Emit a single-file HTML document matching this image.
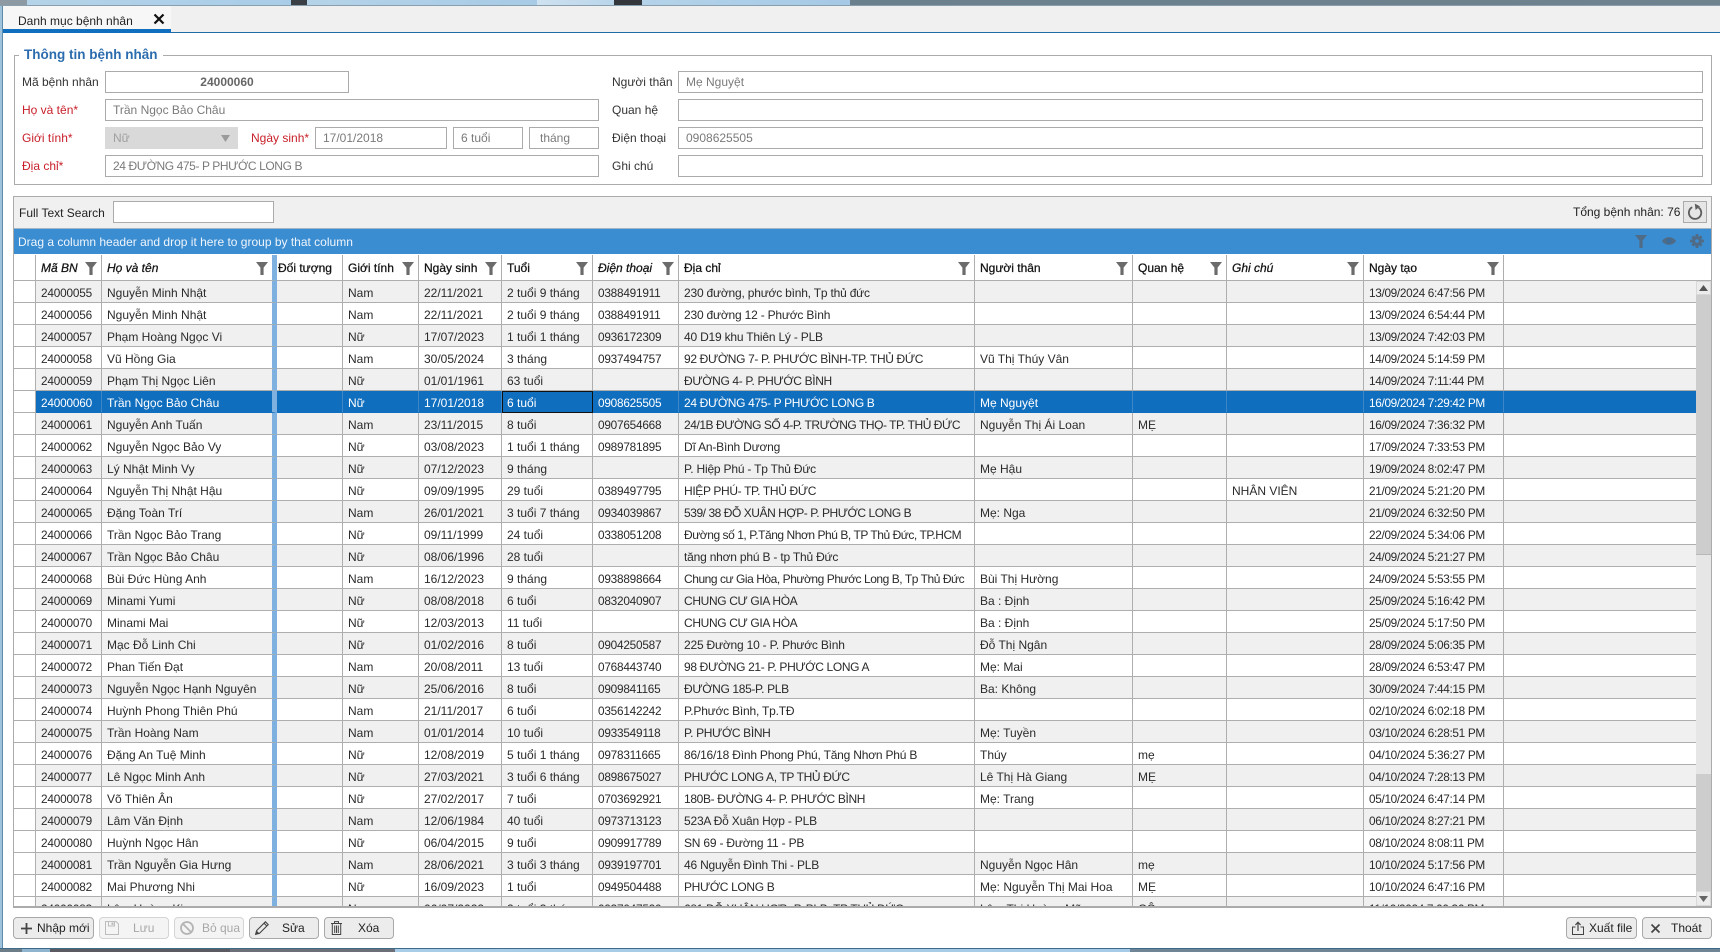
<!DOCTYPE html>
<html lang="vi"><head><meta charset="utf-8"><title>Danh mục bệnh nhân</title>
<style>
html,body{margin:0;padding:0;width:1720px;height:952px;overflow:hidden;background:#fff;font-family:"Liberation Sans","Noto Sans CJK SC",sans-serif;font-size:12px;color:#222}
.a{position:absolute}
.lb{position:absolute;line-height:22px;height:22px;white-space:nowrap;color:#333}
.req{color:#c8202a}
.in{position:absolute;box-sizing:border-box;height:22px;border:1px solid #ababab;background:#fff;line-height:20px;padding-left:7px;color:#7a7a7a;white-space:nowrap;overflow:hidden}
table{border-collapse:separate;border-spacing:0;table-layout:fixed;width:1682px}
td{box-sizing:border-box;height:22px;padding:3px 0 0 5px;vertical-align:top;border-right:1px solid #aeaeae;border-bottom:1px solid #aeaeae;white-space:nowrap;overflow:hidden;line-height:18px;color:#2a2a2a;font-size:12px}
#bd tr:nth-child(odd) td{background:#f0f0f0}
#bd tr:nth-child(even) td{background:#fff}
#bd td:nth-child(1){background:#fff!important}
#bd td:nth-child(2){font-size:11.8px;letter-spacing:-.19px}
#bd td:nth-child(8){font-size:11.8px;letter-spacing:-.23px}
#bd td:nth-child(9){letter-spacing:-.2px}
#bd td.u{letter-spacing:-.35px}
#bd td.v{letter-spacing:-.45px}
#bd td:nth-child(13){font-size:11.8px;letter-spacing:-.32px}
#bd td:nth-child(3){border-right:5px solid #7fb1e0}
#bd td:last-child{border-right:0}
#bd tr.sel td{background:#106ebe!important;color:#fff;border-bottom-color:#106ebe;border-right-color:#3d87c8}
#bd tr.sel td:nth-child(1){background:#fff!important;border-bottom-color:#aeaeae;border-right-color:#aeaeae}
#bd tr.sel td:nth-child(3){border-right-color:#7fb1e0}
#bd tr.sel td.f{outline:1px solid #111;outline-offset:-1px}
#hd td{height:26px;background:#fff;color:#111;padding-top:2px;line-height:23px;-webkit-text-stroke:.25px #111}
#hd td.i{font-style:italic}
#hd td:nth-child(3){border-right:5px solid #7fb1e0}
#hd td:last-child{border-right:0}
.fi{position:absolute;top:262px;width:12px;height:13px}
.btn{position:absolute;box-sizing:border-box;top:917px;height:22px;border:1px solid #a9a9a9;border-radius:4px;background:#ececec}
.btn.d{border-color:#d4d4d4;background:#f4f4f4}
.bt{position:absolute;top:917px;line-height:22px;white-space:nowrap;color:#222}
.bt.d{color:#a8a8a8}
svg{position:absolute;overflow:visible}
</style></head><body>

<!-- desktop background strips -->
<div class="a" style="left:0;top:0;width:1720px;height:5px;background:linear-gradient(90deg,#8d9aa3 0,#8d9aa3 27px,#b4d3e8 27px,#a9cde8 291px,#3a3f46 291px,#3a3f46 307px,#b5d3e8 307px,#a7cbe6 537px,#cfe2f0 537px,#b9d5ea 614px,#33373c 614px,#33373c 642px,#b4d3e9 642px,#a5c9e6 850px,#6b808d 850px,#6f838f 1720px)"></div>
<div class="a" style="left:0;top:5px;width:1720px;height:1px;background:#8a9fae"></div>
<div class="a" style="left:0;top:949px;width:1720px;height:3px;background:linear-gradient(90deg,#6c7c88 0,#6c7c88 22px,#8fb4d0 22px,#8fb4d0 50px,#5a5a60 50px,#5a5a60 230px,#6d6f78 230px,#6d6f78 395px,#a8cde8 395px,#a5cbe8 1130px,#6f8595 1130px,#6f8595 1720px)"></div>
<div class="a" style="left:0;top:948px;width:1720px;height:1px;background:#3d6c8b"></div>
<div class="a" style="left:0;top:6px;width:2px;height:942px;background:#9fc3dc"></div>
<div class="a" style="left:2px;top:6px;width:1px;height:942px;background:#5f8bab"></div>

<!-- tab bar -->
<div class="a" style="left:3px;top:6px;width:1717px;height:26px;background:#f0f0f0"></div>
<div class="a" style="left:3px;top:32px;width:1717px;height:1px;background:#1f6ba6"></div>
<div class="a" style="left:3px;top:6px;width:168px;height:23px;background:#f7f7f7"></div>
<div class="a" style="left:3px;top:29px;width:168px;height:4px;background:#106ebe"></div>
<div class="a" style="left:18px;top:10px;line-height:22px;color:#222">Danh mục bệnh nhân</div>
<svg style="left:154px;top:14px" width="10" height="10" viewBox="0 0 10 10"><path d="M.5 .5L9.5 9.5M9.5 .5L.5 9.5" stroke="#111" stroke-width="2.2" fill="none"/></svg>

<!-- fieldset -->
<div class="a" style="left:14px;top:55px;width:1696px;height:128px;border:1px solid #ababab"></div>
<div class="a" style="left:19px;top:45px;width:144px;height:20px;background:#fff"></div>
<div class="a" style="left:24px;top:45px;line-height:20px;font-weight:bold;font-size:13.5px;color:#2b6cae">Thông tin bệnh nhân</div>

<div class="lb" style="left:22px;top:71px">Mã bệnh nhân</div>
<div class="in" style="left:105px;top:71px;width:244px;text-align:center;font-weight:bold;color:#666;padding:0">24000060</div>
<div class="lb req" style="left:22px;top:99px">Họ và tên*</div>
<div class="in" style="left:105px;top:99px;width:494px">Trần Ngọc Bảo Châu</div>
<div class="lb req" style="left:22px;top:127px">Giới tính*</div>
<div class="in" style="left:105px;top:127px;width:133px;background:#d9d9d9;border-color:#d9d9d9;color:#a0a0a0">Nữ</div>
<svg style="left:221px;top:135px" width="9" height="7" viewBox="0 0 9 7"><path d="M0 0H9L4.5 7Z" fill="#9a9a9a"/></svg>
<div class="lb req" style="left:251px;top:127px">Ngày sinh*</div>
<div class="in" style="left:315px;top:127px;width:132px">17/01/2018</div>
<div class="in" style="left:453px;top:127px;width:70px">6 tuổi</div>
<div class="in" style="left:529px;top:127px;width:70px;padding-left:10px">tháng</div>
<div class="lb req" style="left:22px;top:155px">Địa chỉ*</div>
<div class="in" style="left:105px;top:155px;width:494px;letter-spacing:-.4px">24 ĐƯỜNG 475- P PHƯỚC LONG B</div>

<div class="lb" style="left:612px;top:71px">Người thân</div>
<div class="in" style="left:678px;top:71px;width:1025px">Mẹ Nguyệt</div>
<div class="lb" style="left:612px;top:99px">Quan hệ</div>
<div class="in" style="left:678px;top:99px;width:1025px"></div>
<div class="lb" style="left:612px;top:127px">Điện thoại</div>
<div class="in" style="left:678px;top:127px;width:1025px">0908625505</div>
<div class="lb" style="left:612px;top:155px">Ghi chú</div>
<div class="in" style="left:678px;top:155px;width:1025px"></div>

<!-- grid frame -->
<div class="a" style="left:13px;top:196px;width:1697px;height:710px;border:1px solid #ababab;background:#fff"></div>
<div class="a" style="left:14px;top:197px;width:1697px;height:31px;background:#f0f0f0"></div>
<div class="lb" style="left:19px;top:202px;color:#222">Full Text Search</div>
<div class="in" style="left:113px;top:201px;width:161px"></div>
<div class="lb" style="left:1573px;top:201px;color:#222">Tổng bệnh nhân: 76</div>
<div class="a" style="box-sizing:border-box;left:1683px;top:201px;width:24px;height:22px;background:#e6e6e6;border:1px solid #ababab"></div>
<svg style="left:1687px;top:203px" width="16" height="18" viewBox="0 0 16 18"><path d="M11.6 4.6A6.2 6.2 0 1 1 5.2 4.2" fill="none" stroke="#5c5c5c" stroke-width="1.8"/><path d="M7.8 0.6L13 3.4L8.6 7Z" fill="#5c5c5c"/></svg>

<!-- group bar -->
<div class="a" style="left:14px;top:228px;width:1697px;height:1px;background:#9fb6c8"></div>
<div class="a" style="left:14px;top:229px;width:1697px;height:25px;background:#3b8dd2"></div>
<div class="a" style="left:18px;top:231px;line-height:22px;color:#eef5fb">Drag a column header and drop it here to group by that column</div>
<svg style="left:1635px;top:235px" width="12" height="13" viewBox="0 0 12 13"><path d="M0 0H12L7.6 5.6V13H4.4V5.6Z" fill="#4f6b85"/></svg>
<svg style="left:1662px;top:236px" width="14" height="10" viewBox="0 0 14 10"><path d="M0 5C3 0 11 0 14 5C11 10 3 10 0 5Z" fill="#4f6b85"/><circle cx="7" cy="5" r="2.4" fill="#3b6c9c"/></svg>
<svg style="left:1690px;top:234px" width="14" height="14" viewBox="0 0 14 14"><circle cx="7" cy="7" r="3.4" fill="none" stroke="#4f6b85" stroke-width="3.2"/><path d="M5.6 0H8.4V3H5.6ZM5.6 11H8.4V14H5.6ZM0 5.6H3V8.4H0ZM11 5.6H14V8.4H11ZM1.4 3.4L3.4 1.4L5 3L3 5ZM9 11L11 9L12.6 10.6L10.6 12.6ZM10.6 1.4L12.6 3.4L11 5L9 3ZM3 9L5 11L3.4 12.6L1.4 10.6Z" fill="#4f6b85"/></svg>

<!-- header -->
<div class="a" style="left:14px;top:255px;width:1697px;height:26px;background:#fff;border-bottom:0"></div>
<div class="a" style="left:14px;top:280px;width:1697px;height:1px;background:#aeaeae"></div>
<table id="hd" class="a" style="left:14px;top:255px">
<colgroup><col style="width:22px"><col style="width:66px"><col style="width:175px"><col style="width:66px"><col style="width:76px"><col style="width:83px"><col style="width:91px"><col style="width:86px"><col style="width:296px"><col style="width:158px"><col style="width:94px"><col style="width:137px"><col style="width:140px"><col style="width:192px"></colgroup>
<tr><td></td><td class="i">Mã BN</td><td class="i">Họ và tên</td><td style="padding-left:1px">Đối tượng</td><td>Giới tính</td><td>Ngày sinh</td><td>Tuổi</td><td class="i">Điện thoại</td><td>Địa chỉ</td><td>Người thân</td><td>Quan hệ</td><td class="i">Ghi chú</td><td>Ngày tạo</td><td style="border-bottom:1px solid #aeaeae"></td></tr>
</table>
<svg class="fi" style="left:85px" viewBox="0 0 12 13"><path d="M0 0H12L7.6 5.6V13H4.4V5.6Z" fill="#6b6b6b"/></svg>
<svg class="fi" style="left:256px" viewBox="0 0 12 13"><path d="M0 0H12L7.6 5.6V13H4.4V5.6Z" fill="#6b6b6b"/></svg>
<svg class="fi" style="left:402px" viewBox="0 0 12 13"><path d="M0 0H12L7.6 5.6V13H4.4V5.6Z" fill="#6b6b6b"/></svg>
<svg class="fi" style="left:485px" viewBox="0 0 12 13"><path d="M0 0H12L7.6 5.6V13H4.4V5.6Z" fill="#6b6b6b"/></svg>
<svg class="fi" style="left:576px" viewBox="0 0 12 13"><path d="M0 0H12L7.6 5.6V13H4.4V5.6Z" fill="#6b6b6b"/></svg>
<svg class="fi" style="left:662px" viewBox="0 0 12 13"><path d="M0 0H12L7.6 5.6V13H4.4V5.6Z" fill="#6b6b6b"/></svg>
<svg class="fi" style="left:958px" viewBox="0 0 12 13"><path d="M0 0H12L7.6 5.6V13H4.4V5.6Z" fill="#6b6b6b"/></svg>
<svg class="fi" style="left:1116px" viewBox="0 0 12 13"><path d="M0 0H12L7.6 5.6V13H4.4V5.6Z" fill="#6b6b6b"/></svg>
<svg class="fi" style="left:1210px" viewBox="0 0 12 13"><path d="M0 0H12L7.6 5.6V13H4.4V5.6Z" fill="#6b6b6b"/></svg>
<svg class="fi" style="left:1347px" viewBox="0 0 12 13"><path d="M0 0H12L7.6 5.6V13H4.4V5.6Z" fill="#6b6b6b"/></svg>
<svg class="fi" style="left:1487px" viewBox="0 0 12 13"><path d="M0 0H12L7.6 5.6V13H4.4V5.6Z" fill="#6b6b6b"/></svg>

<!-- body -->
<div class="a" style="left:14px;top:281px;width:1682px;height:625px;overflow:hidden">
<table id="bd">
<colgroup><col style="width:22px"><col style="width:66px"><col style="width:175px"><col style="width:66px"><col style="width:76px"><col style="width:83px"><col style="width:91px"><col style="width:86px"><col style="width:296px"><col style="width:158px"><col style="width:94px"><col style="width:137px"><col style="width:140px"><col style="width:192px"></colgroup>
<tr><td></td><td>24000055</td><td>Nguyễn Minh Nhật</td><td></td><td>Nam</td><td>22/11/2021</td><td>2 tuổi 9 tháng</td><td>0388491911</td><td>230 đường, phước bình, Tp thủ đức</td><td></td><td></td><td></td><td>13/09/2024 6:47:56 PM</td><td></td></tr>
<tr><td></td><td>24000056</td><td>Nguyễn Minh Nhật</td><td></td><td>Nam</td><td>22/11/2021</td><td>2 tuổi 9 tháng</td><td>0388491911</td><td>230 đường 12 - Phước Bình</td><td></td><td></td><td></td><td>13/09/2024 6:54:44 PM</td><td></td></tr>
<tr><td></td><td>24000057</td><td>Phạm Hoàng Ngọc Vi</td><td></td><td>Nữ</td><td>17/07/2023</td><td>1 tuổi 1 tháng</td><td>0936172309</td><td>40 D19 khu Thiên Lý - PLB</td><td></td><td></td><td></td><td>13/09/2024 7:42:03 PM</td><td></td></tr>
<tr><td></td><td>24000058</td><td>Vũ Hồng Gia</td><td></td><td>Nam</td><td>30/05/2024</td><td>3 tháng</td><td>0937494757</td><td class="u">92 ĐƯỜNG 7- P. PHƯỚC BÌNH-TP. THỦ ĐỨC</td><td>Vũ Thị Thúy Vân</td><td></td><td></td><td>14/09/2024 5:14:59 PM</td><td></td></tr>
<tr><td></td><td>24000059</td><td>Phạm Thị Ngọc Liên</td><td></td><td>Nữ</td><td>01/01/1961</td><td>63 tuổi</td><td></td><td class="u">ĐƯỜNG 4- P. PHƯỚC BÌNH</td><td></td><td></td><td></td><td>14/09/2024 7:11:44 PM</td><td></td></tr>
<tr class="sel"><td></td><td>24000060</td><td>Trần Ngọc Bảo Châu</td><td></td><td>Nữ</td><td>17/01/2018</td><td class="f">6 tuổi</td><td>0908625505</td><td class="u">24 ĐƯỜNG 475- P PHƯỚC LONG B</td><td>Mẹ Nguyệt</td><td></td><td></td><td>16/09/2024 7:29:42 PM</td><td></td></tr>
<tr><td></td><td>24000061</td><td>Nguyễn Anh Tuấn</td><td></td><td>Nam</td><td>23/11/2015</td><td>8 tuổi</td><td>0907654668</td><td class="v">24/1B ĐƯỜNG SỐ 4-P. TRƯỜNG THỌ- TP. THỦ ĐỨC</td><td>Nguyễn Thị Ái Loan</td><td>MẸ</td><td></td><td>16/09/2024 7:36:32 PM</td><td></td></tr>
<tr><td></td><td>24000062</td><td>Nguyễn Ngọc Bảo Vy</td><td></td><td>Nữ</td><td>03/08/2023</td><td>1 tuổi 1 tháng</td><td>0989781895</td><td>Dĩ An-Bình Dương</td><td></td><td></td><td></td><td>17/09/2024 7:33:53 PM</td><td></td></tr>
<tr><td></td><td>24000063</td><td>Lý Nhật Minh Vy</td><td></td><td>Nữ</td><td>07/12/2023</td><td>9 tháng</td><td></td><td>P. Hiệp Phú - Tp Thủ Đức</td><td>Mẹ Hậu</td><td></td><td></td><td>19/09/2024 8:02:47 PM</td><td></td></tr>
<tr><td></td><td>24000064</td><td>Nguyễn Thị Nhật Hậu</td><td></td><td>Nữ</td><td>09/09/1995</td><td>29 tuổi</td><td>0389497795</td><td class="u">HIỆP PHÚ- TP. THỦ ĐỨC</td><td></td><td></td><td>NHÂN VIÊN</td><td>21/09/2024 5:21:20 PM</td><td></td></tr>
<tr><td></td><td>24000065</td><td>Đặng Toàn Trí</td><td></td><td>Nam</td><td>26/01/2021</td><td>3 tuổi 7 tháng</td><td>0934039867</td><td class="v">539/ 38 ĐỖ XUÂN HỢP- P. PHƯỚC LONG B</td><td>Mẹ: Nga</td><td></td><td></td><td>21/09/2024 6:32:50 PM</td><td></td></tr>
<tr><td></td><td>24000066</td><td>Trần Ngọc Bảo Trang</td><td></td><td>Nữ</td><td>09/11/1999</td><td>24 tuổi</td><td>0338051208</td><td class="v">Đường số 1, P.Tăng Nhơn Phú B, TP Thủ Đức, TP.HCM</td><td></td><td></td><td></td><td>22/09/2024 5:34:06 PM</td><td></td></tr>
<tr><td></td><td>24000067</td><td>Trần Ngọc Bảo Châu</td><td></td><td>Nữ</td><td>08/06/1996</td><td>28 tuổi</td><td></td><td>tăng nhơn phú B - tp Thủ Đức</td><td></td><td></td><td></td><td>24/09/2024 5:21:27 PM</td><td></td></tr>
<tr><td></td><td>24000068</td><td>Bùi Đức Hùng Anh</td><td></td><td>Nam</td><td>16/12/2023</td><td>9 tháng</td><td>0938898664</td><td class="v">Chung cư Gia Hòa, Phường Phước Long B, Tp Thủ Đức</td><td>Bùi Thị Hường</td><td></td><td></td><td>24/09/2024 5:53:55 PM</td><td></td></tr>
<tr><td></td><td>24000069</td><td>Minami Yumi</td><td></td><td>Nữ</td><td>08/08/2018</td><td>6 tuổi</td><td>0832040907</td><td class="u">CHUNG CƯ GIA HÒA</td><td>Ba : Định</td><td></td><td></td><td>25/09/2024 5:16:42 PM</td><td></td></tr>
<tr><td></td><td>24000070</td><td>Minami Mai</td><td></td><td>Nữ</td><td>12/03/2013</td><td>11 tuổi</td><td></td><td class="u">CHUNG CƯ GIA HÒA</td><td>Ba : Định</td><td></td><td></td><td>25/09/2024 5:17:50 PM</td><td></td></tr>
<tr><td></td><td>24000071</td><td>Mạc Đỗ Linh Chi</td><td></td><td>Nữ</td><td>01/02/2016</td><td>8 tuổi</td><td>0904250587</td><td>225 Đường 10 - P. Phước Bình</td><td>Đỗ Thị Ngân</td><td></td><td></td><td>28/09/2024 5:06:35 PM</td><td></td></tr>
<tr><td></td><td>24000072</td><td>Phan Tiến Đạt</td><td></td><td>Nam</td><td>20/08/2011</td><td>13 tuổi</td><td>0768443740</td><td class="u">98 ĐƯỜNG 21- P. PHƯỚC LONG A</td><td>Mẹ: Mai</td><td></td><td></td><td>28/09/2024 6:53:47 PM</td><td></td></tr>
<tr><td></td><td>24000073</td><td>Nguyễn Ngọc Hạnh Nguyên</td><td></td><td>Nữ</td><td>25/06/2016</td><td>8 tuổi</td><td>0909841165</td><td class="u">ĐƯỜNG 185-P. PLB</td><td>Ba: Không</td><td></td><td></td><td>30/09/2024 7:44:15 PM</td><td></td></tr>
<tr><td></td><td>24000074</td><td>Huỳnh Phong Thiên Phú</td><td></td><td>Nam</td><td>21/11/2017</td><td>6 tuổi</td><td>0356142242</td><td>P.Phước Bình, Tp.TĐ</td><td></td><td></td><td></td><td>02/10/2024 6:02:18 PM</td><td></td></tr>
<tr><td></td><td>24000075</td><td>Trần Hoàng Nam</td><td></td><td>Nam</td><td>01/01/2014</td><td>10 tuổi</td><td>0933549118</td><td class="u">P. PHƯỚC BÌNH</td><td>Mẹ: Tuyền</td><td></td><td></td><td>03/10/2024 6:28:51 PM</td><td></td></tr>
<tr><td></td><td>24000076</td><td>Đặng An Tuệ Minh</td><td></td><td>Nữ</td><td>12/08/2019</td><td>5 tuổi 1 tháng</td><td>0978311665</td><td>86/16/18 Đình Phong Phú, Tăng Nhơn Phú B</td><td>Thúy</td><td>mẹ</td><td></td><td>04/10/2024 5:36:27 PM</td><td></td></tr>
<tr><td></td><td>24000077</td><td>Lê Ngọc Minh Anh</td><td></td><td>Nữ</td><td>27/03/2021</td><td>3 tuổi 6 tháng</td><td>0898675027</td><td class="u">PHƯỚC LONG A, TP THỦ ĐỨC</td><td>Lê Thị Hà Giang</td><td>MẸ</td><td></td><td>04/10/2024 7:28:13 PM</td><td></td></tr>
<tr><td></td><td>24000078</td><td>Võ Thiên Ân</td><td></td><td>Nữ</td><td>27/02/2017</td><td>7 tuổi</td><td>0703692921</td><td class="u">180B- ĐƯỜNG 4- P. PHƯỚC BÌNH</td><td>Mẹ: Trang</td><td></td><td></td><td>05/10/2024 6:47:14 PM</td><td></td></tr>
<tr><td></td><td>24000079</td><td>Lâm Văn Định</td><td></td><td>Nam</td><td>12/06/1984</td><td>40 tuổi</td><td>0973713123</td><td>523A Đỗ Xuân Hợp - PLB</td><td></td><td></td><td></td><td>06/10/2024 8:27:21 PM</td><td></td></tr>
<tr><td></td><td>24000080</td><td>Huỳnh Ngọc Hân</td><td></td><td>Nữ</td><td>06/04/2015</td><td>9 tuổi</td><td>0909917789</td><td>SN 69 - Đường 11 - PB</td><td></td><td></td><td></td><td>08/10/2024 8:08:11 PM</td><td></td></tr>
<tr><td></td><td>24000081</td><td>Trần Nguyễn Gia Hưng</td><td></td><td>Nam</td><td>28/06/2021</td><td>3 tuổi 3 tháng</td><td>0939197701</td><td>46 Nguyễn Đình Thi - PLB</td><td>Nguyễn Ngọc Hân</td><td>mẹ</td><td></td><td>10/10/2024 5:17:56 PM</td><td></td></tr>
<tr><td></td><td>24000082</td><td>Mai Phương Nhi</td><td></td><td>Nữ</td><td>16/09/2023</td><td>1 tuổi</td><td>0949504488</td><td class="u">PHƯỚC LONG B</td><td>Mẹ: Nguyễn Thị Mai Hoa</td><td>MẸ</td><td></td><td>10/10/2024 6:47:16 PM</td><td></td></tr>
<tr><td></td><td>24000083</td><td>Lâm Hoàng Kim</td><td></td><td>Nam</td><td>06/07/2022</td><td>2 tuổi 3 tháng</td><td>0937047520</td><td class="u">681 ĐỖ XUÂN HỢP- P. PLB, TP THỦ ĐỨC</td><td>Lâm Thị Hoàng Mỹ</td><td>CÔ</td><td></td><td>11/10/2024 7:00:36 PM</td><td></td></tr>
</table>
</div>
<div class="a" style="left:13px;top:906px;width:1699px;height:1px;background:#ababab"></div>

<!-- scrollbar -->
<div class="a" style="left:1696px;top:281px;width:15px;height:625px;background:#cdcdcd"></div>
<div class="a" style="left:1696px;top:281px;width:15px;height:14px;background:#ececec;box-sizing:border-box;border:1px solid #d8d8d8"></div>
<svg style="left:1699px;top:285px" width="9" height="6" viewBox="0 0 9 6"><path d="M4.5 0L9 6H0Z" fill="#555"/></svg>
<div class="a" style="left:1696px;top:554px;width:15px;height:220px;background:#e6e6e6;box-sizing:border-box;border-top:1px solid #b8b8b8"></div>
<div class="a" style="left:1696px;top:891px;width:15px;height:15px;background:#ececec;box-sizing:border-box;border:1px solid #d8d8d8"></div>
<svg style="left:1699px;top:896px" width="9" height="6" viewBox="0 0 9 6"><path d="M0 0H9L4.5 6Z" fill="#666"/></svg>

<!-- bottom buttons -->
<div class="btn" style="left:13px;width:81px"></div>
<svg style="left:21px;top:923px" width="11" height="11" viewBox="0 0 11 11"><path d="M5.5 0V11M0 5.5H11" stroke="#444" stroke-width="1.8" fill="none"/></svg>
<div class="bt" style="left:37px">Nhập mới</div>

<div class="btn d" style="left:99px;width:70px"></div>
<svg style="left:105px;top:921px" width="14" height="14" viewBox="0 0 14 14"><path d="M.5 .5H11L13.5 3V13.5H.5ZM3.5 .5V5H9.5V.5" fill="none" stroke="#bdbdbd" stroke-width="1"/><path d="M6.5 1.4H8.5V4H6.5Z" fill="#bdbdbd"/></svg>
<div class="bt d" style="left:133px">Lưu</div>

<div class="btn d" style="left:174px;width:70px"></div>
<svg style="left:180px;top:921px" width="14" height="14" viewBox="0 0 14 14"><circle cx="7" cy="7" r="6" fill="none" stroke="#b4b4b4" stroke-width="1.8"/><path d="M2.8 2.8L11.2 11.2" stroke="#b4b4b4" stroke-width="1.8"/></svg>
<div class="bt d" style="left:202px">Bỏ qua</div>

<div class="btn" style="left:249px;width:70px"></div>
<svg style="left:255px;top:921px" width="14" height="14" viewBox="0 0 14 14"><path d="M0.6 13.4L1.6 9.6L10.4 .8L13.2 3.6L4.4 12.4Z" fill="none" stroke="#444" stroke-width="1.1"/><path d="M1.6 9.6L4.4 12.4L.6 13.4Z" fill="#444"/><path d="M9 2.2L11.8 5" stroke="#444" stroke-width="1.1"/></svg>
<div class="bt" style="left:282px">Sửa</div>

<div class="btn" style="left:324px;width:70px"></div>
<svg style="left:331px;top:921px" width="11" height="14" viewBox="0 0 11 14"><path d="M0 2.5H11M3.5 2.5V.6H7.5V2.5M1.3 2.5V13.5H9.7V2.5M3.7 4.5V12M5.5 4.5V12M7.3 4.5V12" fill="none" stroke="#444" stroke-width="1"/></svg>
<div class="bt" style="left:358px">Xóa</div>

<div class="btn" style="left:1566px;width:71px"></div>
<svg style="left:1572px;top:921px" width="12" height="14" viewBox="0 0 12 14"><path d="M3.5 6H.5V13.5H11.5V6H8.5" fill="none" stroke="#444" stroke-width="1"/><path d="M6 10V1.5M3.4 4L6 1.2L8.6 4" fill="none" stroke="#444" stroke-width="1.2"/></svg>
<div class="bt" style="left:1589px">Xuất file</div>

<div class="btn" style="left:1642px;width:70px"></div>
<svg style="left:1651px;top:924px" width="9" height="9" viewBox="0 0 9 9"><path d="M.5 .5L8.5 8.5M8.5 .5L.5 8.5" stroke="#444" stroke-width="1.7" fill="none"/></svg>
<div class="bt" style="left:1671px">Thoát</div>
</body></html>
